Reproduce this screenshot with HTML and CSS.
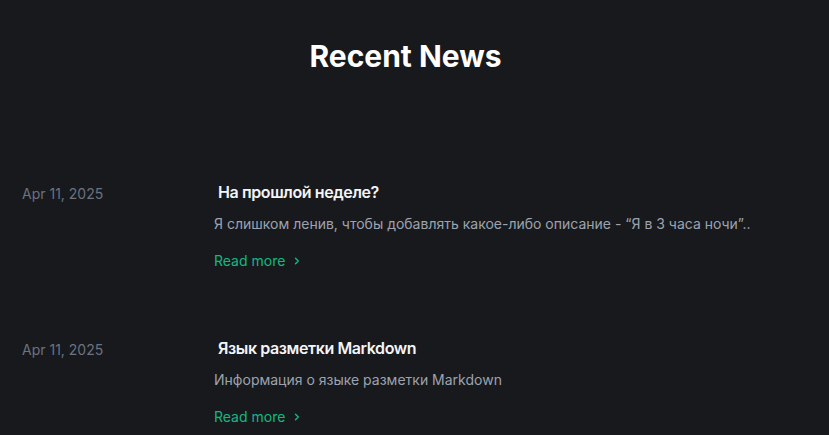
FILE: index.html
```html
<!DOCTYPE html>
<html lang="ru">
<head>
<meta charset="utf-8">
<link rel="stylesheet" href="styles.css">
</head>
<body>
<main class="page">
  <h2 class="title">Recent News</h2>
  <div class="list">
    <article class="row">
      <time class="date">Apr 11, 2025</time>
      <div class="body">
        <h3 class="heading">На прошлой неделе?</h3>
        <p class="desc">Я слишком ленив, чтобы добавлять какое-либо описание - “Я в 3 часа ночи”..</p>
        <a class="more" href="#">Read more <svg class="chev" width="8" height="8" viewBox="0 0 8 8"><path d="M2.5 1.2 L5.3 4 L2.5 6.8" fill="none" stroke="currentColor" stroke-width="1.4" stroke-linecap="round" stroke-linejoin="round"/></svg></a>
      </div>
    </article>
    <article class="row">
      <time class="date">Apr 11, 2025</time>
      <div class="body">
        <h3 class="heading">Язык разметки Markdown</h3>
        <p class="desc">Информация о языке разметки Markdown</p>
        <a class="more" href="#">Read more <svg class="chev" width="8" height="8" viewBox="0 0 8 8"><path d="M2.5 1.2 L5.3 4 L2.5 6.8" fill="none" stroke="currentColor" stroke-width="1.4" stroke-linecap="round" stroke-linejoin="round"/></svg></a>
      </div>
    </article>
  </div>
</main>
</body>
</html>
```
FILE: styles.css
```css
html, body {
  margin: 0;
  background: #18191d;
}
body {
  font-family: Inter, "Noto Sans", sans-serif;
  color: #fff;
}
.page {
  padding: 38px 0 0 22px;
}
.title {
  margin: 0;
  padding-right: 40px;
  text-align: center;
  font-size: 30px;
  line-height: 36px;
  font-weight: 700;
  color: #fff;
}
.list {
  margin-top: 106px;
  display: flex;
  flex-direction: column;
  gap: 63px;
}
.row {
  display: grid;
  grid-template-columns: 192px 1fr;
}
.date {
  padding-top: 2px;
  font-size: 14px;
  line-height: 24px;
  color: #6b7280;
}
.heading {
  margin: 0 0 0 4px;
  font-size: 16px;
  line-height: 24px;
  font-weight: 600;
  letter-spacing: -0.025em;
  color: #f3f4f6;
}
.desc {
  margin: 8px 0 0;
  font-size: 14px;
  line-height: 24px;
  color: #9ca3af;
}
.more {
  display: inline-flex;
  align-items: center;
  gap: 6px;
  margin-top: 13px;
  font-size: 14px;
  line-height: 24px;
  color: #10b981;
  text-decoration: none;
}
.chev {
  margin-left: 2px;
}
```
